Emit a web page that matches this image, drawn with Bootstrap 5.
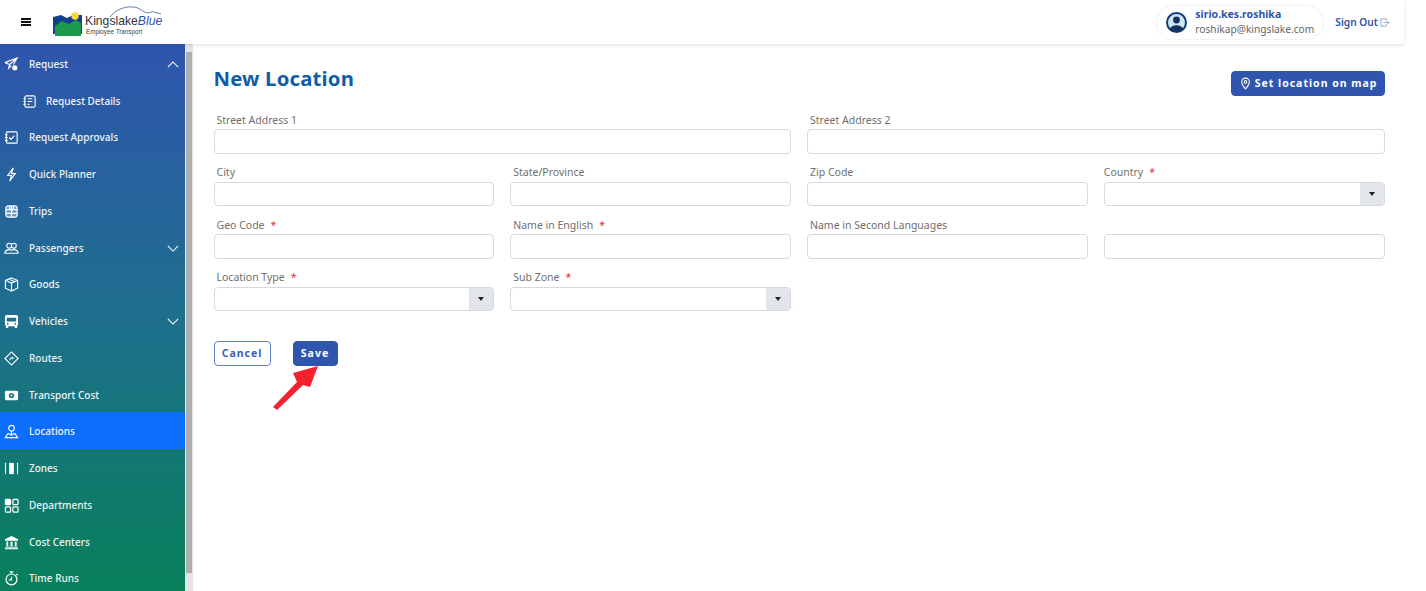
<!DOCTYPE html>
<html lang="en"><head><meta charset="utf-8"><title>New Location</title>
<link href="https://cdn.jsdelivr.net/npm/bootstrap@5.3.0/dist/css/bootstrap.min.css" rel="stylesheet">
<style>
html,body{height:591px;overflow:hidden;background:#fff}
body{font-family:"Noto Sans","Open Sans",sans-serif;position:relative}
.app-frame{width:1404px;height:591px}
.top-bar{height:44px;box-shadow:0 1px 4px rgba(0,0,0,.12);position:relative;z-index:2;background:#fff;flex:none}
.burger{width:10px;height:8px;margin-left:21px;border-top:2px solid #111;border-bottom:2px solid #111;position:relative}
.burger::after{content:"";position:absolute;left:0;right:0;top:1px;height:2px;background:#111}
.logo-box{margin-left:22px;width:110px;height:38px;position:relative;gap:3px;font-family:"Liberation Sans",sans-serif}
.logo-cloud{position:absolute;left:55px;top:2px;width:54px;height:14px}
.logo-text{padding-top:12px}
.logo-word{font-size:12.2px;color:#333;line-height:13px;white-space:nowrap}
.logo-blue{font-style:italic;color:#2f55a8}
.logo-sub{font-size:6.3px;color:#444;line-height:8px;padding-left:1px;white-space:nowrap}
.user-pill{width:168px;height:35px;border:1px solid #f3f3f3;border-radius:18px;padding-left:9px;margin-right:11px;box-shadow:0 0 3px rgba(0,0,0,.04)}
.user-name{font-size:10.5px;font-weight:700;color:#2f55a8;line-height:15px}
.user-mail{font-size:10.2px;color:#666;line-height:15px}
.sign-out{font-size:10.2px;font-weight:600;color:#2f55a8;margin-right:14px;gap:2px;padding-top:1px}
.side-nav{width:185px;height:547px;background:linear-gradient(180deg,#2f55ae 0%,#1e6f8d 50%,#08805a 100%);flex:none;padding-top:.5px;overflow:hidden}
.side-item{height:36.75px;color:#eef4f6;font-size:10px;font-weight:500;padding:3px 0 0 4px}
.side-item svg.ic{width:15px;height:15px;margin-right:10px;flex:none}
.side-item.sub-item{padding-left:22px}
.side-item.sub-item svg.ic{margin-right:9px}
.side-item.on{background:#0d6efd}
.chev{width:12px;height:7px;margin-left:auto;margin-right:6px}
.side-scroll{width:8px;height:547px;background:#e4e4e4;flex:none;padding:8px 1px 18px 1px}
.side-thumb{height:100%;background:#aeaeae}
.work-area{padding:0 19.5px 0 20.5px}
.page-title{font-size:20.3px;font-weight:700;color:#0f5ca8;margin:0;line-height:28px;letter-spacing:.2px}
.title-row{padding-top:20px;height:68px}
.map-btn,.save-btn{background:#2f55ae;border:1px solid #2f55ae;color:#fff;font-family:"Noto Sans",sans-serif;font-weight:700;font-size:10.5px;letter-spacing:1px;border-radius:4px}
.map-btn{height:25px;padding:0 6px 0 7px;margin-top:7px;gap:3px}
.form-cols{--bs-gutter-x:16px;--bs-gutter-y:0}
.field-label{font-size:10.5px;color:#6f6f6f;line-height:14px;height:17px;padding:.5px 0 0 3px;margin:0;display:block}
.field-label.flush{padding-left:0}
.req{color:#e0323c;margin-left:6px}
.field-box{height:24.5px;border:1px solid #d7d9e2;border-radius:4px;background:#fff;padding:0;margin-bottom:11px;box-shadow:none}
.drop-cap{width:24px;background:#e2e5e9;border-radius:0 3px 3px 0;height:100%;margin-left:auto}
.drop-cap::after{content:"";border-left:3.5px solid transparent;border-right:3.5px solid transparent;border-top:4px solid #222}
.act-row{margin-top:19px;gap:22px}
.cancel-btn{height:25px;width:57px;background:#fff;border:1px solid #5f7ec6;color:#3c60b3;font-weight:700;font-size:10.5px;letter-spacing:1px;border-radius:4px;padding:0}
.save-btn{height:25px;width:45px;padding:0}
.pointer-arrow{position:absolute;left:270px;top:362px;width:52px;height:50px;filter:blur(.5px)}
</style></head><body>
<div class="app-frame d-flex flex-column">
<header class="top-bar d-flex align-items-center">
 <div class="burger"></div>
 <div class="logo-box d-flex">
  <svg viewBox="0 0 29 38" width="29" height="38" class="flex-shrink-0">
   <path d="M0 14 L8 12 L14 15 L20 12 L29 12 V31 H0 Z" fill="#143f8f"/>
   <path d="M2 33 V23 L9 18 L16 21 L23 17 L28 20 V33 Z" fill="#1c9a4b"/>
   <circle cx="22" cy="13" r="3.7" fill="#f6d92a"/>
  </svg>
  <svg class="logo-cloud" viewBox="0 0 54 14"><path d="M2 12 C7 5 17 1 25 2 C31 2 35 7 39 8 C42 8 44 6 46 7 L53 9" fill="none" stroke="#3e5f9f" stroke-width=".8"/></svg>
  <div class="logo-text">
   <div class="logo-word">Kingslake<span class="logo-blue">Blue</span></div>
   <div class="logo-sub">Employee Transport</div>
  </div>
 </div>
 <div class="user-pill d-flex align-items-center gap-2 ms-auto">
  <svg width="21" height="21" viewBox="0 0 21 21"><circle cx="10.5" cy="10.5" r="9.5" fill="#cfe7f5" stroke="#123a78" stroke-width="2"/><circle cx="10.5" cy="8" r="3.4" fill="#15325e"/><path d="M4 17 C5 12 16 12 17 17 C14 20 7 20 4 17Z" fill="#15325e"/></svg>
  <div><div class="user-name">sirio.kes.roshika</div><div class="user-mail">roshikap@kingslake.com</div></div>
 </div>
 <div class="sign-out d-flex align-items-center">Sign Out
  <svg width="10" height="9" viewBox="0 0 11 10" fill="none" stroke="#8ea3cf" stroke-width="1"><path d="M7 3V1H1V9H7V7M4 5H10M8 3L10 5L8 7"/></svg>
 </div>
</header>
<div class="d-flex flex-grow-1">
 <nav class="side-nav">
  <div class="side-item d-flex align-items-center"><svg class="ic" viewBox="0 0 16 16" fill="none" stroke="#fff" stroke-width="1.2"><path d="M1 6L14 1L10 8M1 6L6 8L14 1M6 8L5 12L8 9"/><circle cx="11.5" cy="11.5" r="2.2" fill="#fff"/></svg>Request<svg class="chev" viewBox="0 0 14 8" fill="none" stroke="#fff" stroke-width="1.2"><path d="M1 7L7 1L13 7"/></svg></div>
  <div class="side-item sub-item d-flex align-items-center"><svg class="ic" viewBox="0 0 16 16" fill="none" stroke="#fff" stroke-width="1.2"><rect x="3" y="2" width="11" height="12" rx="1.5"/><path d="M6 5H11M6 8H11M6 11H8M1.5 5H4M1.5 8H4M1.5 11H4"/></svg>Request Details</div>
  <div class="side-item d-flex align-items-center"><svg class="ic" viewBox="0 0 16 16" fill="none" stroke="#fff" stroke-width="1.2"><rect x="2.5" y="2" width="11.5" height="12" rx="1"/><path d="M5.5 8L7.5 10L11 6M1 5H4M1 8H4M1 11H4"/></svg>Request Approvals</div>
  <div class="side-item d-flex align-items-center"><svg class="ic" viewBox="0 0 16 16" fill="none" stroke="#fff" stroke-width="1.2"><path d="M10 1L4 9H8L6 15L12 7H8Z"/></svg>Quick Planner</div>
  <div class="side-item d-flex align-items-center"><svg class="ic" viewBox="0 0 16 16" fill="none" stroke="#fff" stroke-width="1.3"><rect x="2" y="2" width="12" height="12" rx="2.5" fill="#ffffff55"/><path d="M2 6H14M2 10H14M8 2V14M6 2V6M10 2V6"/></svg>Trips</div>
  <div class="side-item d-flex align-items-center"><svg class="ic" viewBox="0 0 16 16" fill="none" stroke="#fff" stroke-width="1.2"><circle cx="5.5" cy="5" r="2.6"/><circle cx="10.5" cy="5" r="2.6"/><path d="M1 13C1 9 6 8.5 8 10C10 8.5 15 9 15 13Z"/></svg>Passengers<svg class="chev" viewBox="0 0 14 8" fill="none" stroke="#fff" stroke-width="1.2"><path d="M1 1L7 7L13 1"/></svg></div>
  <div class="side-item d-flex align-items-center"><svg class="ic" viewBox="0 0 16 16" fill="none" stroke="#fff" stroke-width="1.2"><path d="M8 1L14.5 3.5V12L8 15L1.5 12V3.5Z M1.5 3.5L8 6.5L14.5 3.5M8 6.5V15M5 2.2L11.5 5"/></svg>Goods</div>
  <div class="side-item d-flex align-items-center"><svg class="ic" viewBox="0 0 16 16"><path d="M3 1H13A2 2 0 0 1 15 3V12H14V15H11.5V13H4.5V15H2V12H1V3A2 2 0 0 1 3 1Z" fill="#fff"/><path d="M3 4H13V8H3Z" fill="#1e6f8d"/><circle cx="4" cy="10.5" r="1" fill="#1e6f8d"/><circle cx="12" cy="10.5" r="1" fill="#1e6f8d"/></svg>Vehicles<svg class="chev" viewBox="0 0 14 8" fill="none" stroke="#fff" stroke-width="1.2"><path d="M1 1L7 7L13 1"/></svg></div>
  <div class="side-item d-flex align-items-center"><svg class="ic" viewBox="0 0 16 16" fill="none" stroke="#fff" stroke-width="1.2"><path d="M8 1L15 8L8 15L1 8Z"/><path d="M6.5 10V7.5H10M8.7 6L10 7.5L8.7 9" stroke-width="1"/></svg>Routes</div>
  <div class="side-item d-flex align-items-center"><svg class="ic" viewBox="0 0 16 16"><rect x="1" y="3" width="14" height="10" rx="1.5" fill="#fff"/><circle cx="8" cy="8" r="2.8" fill="#1a7480"/><circle cx="8" cy="8" r="1" fill="#fff"/></svg>Transport Cost</div>
  <div class="side-item on d-flex align-items-center"><svg class="ic" viewBox="0 0 16 16" fill="none" stroke="#fff" stroke-width="1.2"><circle cx="8" cy="4.5" r="3"/><path d="M8 7.5V11M1.5 14.5L4 10.5H6C7 12.5 9 12.5 10 10.5H12L14.5 14.5Z"/></svg>Locations</div>
  <div class="side-item d-flex align-items-center"><svg class="ic" viewBox="0 0 16 16"><rect x="1" y="2" width="1.2" height="12" fill="#fff"/><rect x="5.5" y="2" width="5" height="12" fill="#fff"/><rect x="13.8" y="2" width="1.2" height="12" fill="#fff"/></svg>Zones</div>
  <div class="side-item d-flex align-items-center"><svg class="ic" viewBox="0 0 16 16" fill="none" stroke="#fff" stroke-width="1.3"><rect x="1.5" y="1.5" width="5.5" height="5.5" rx="1" fill="#fff"/><rect x="9.5" y="1.5" width="5.5" height="5.5" rx="1"/><rect x="1.5" y="9.5" width="5.5" height="5.5" rx="1"/><rect x="9.5" y="9.5" width="5.5" height="5.5" rx="1"/></svg>Departments</div>
  <div class="side-item d-flex align-items-center"><svg class="ic" viewBox="0 0 16 16" fill="#fff"><path d="M8 1L15 4.5V6H1V4.5Z"/><rect x="2.5" y="7" width="2" height="5"/><rect x="7" y="7" width="2" height="5"/><rect x="11.5" y="7" width="2" height="5"/><rect x="1.5" y="12.5" width="13" height="1"/><rect x="1" y="14" width="14" height="1.2"/></svg>Cost Centers</div>
  <div class="side-item d-flex align-items-center"><svg class="ic" viewBox="0 0 16 16" fill="none" stroke="#fff" stroke-width="1.3"><circle cx="8" cy="9" r="5.8"/><path d="M8 6V9.5H5M6 1H10M8 1V3M13 3L14.5 4.5"/></svg>Time Runs</div>
 </nav>
 <div class="side-scroll"><div class="side-thumb"></div></div>
 <main class="work-area flex-grow-1">
  <div class="title-row d-flex justify-content-between align-items-start">
   <h1 class="page-title">New Location</h1>
   <button class="map-btn d-flex align-items-center" type="button"><svg width="13" height="13" viewBox="0 0 12 12" fill="none" stroke="#fff" stroke-width="1"><path d="M6 11C3.5 8 2.5 6.5 2.5 4.5A3.5 3.5 0 0 1 9.5 4.5C9.5 6.5 8.5 8 6 11Z"/><circle cx="6" cy="4.5" r="1.2"/></svg>Set location on map</button>
  </div>
  <div class="row form-cols">
   <div class="col-6"><label class="field-label">Street Address 1</label><div class="field-box"></div></div>
   <div class="col-6"><label class="field-label">Street Address 2</label><div class="field-box"></div></div>
   <div class="col-3"><label class="field-label">City</label><div class="field-box"></div></div>
   <div class="col-3"><label class="field-label">State/Province</label><div class="field-box"></div></div>
   <div class="col-3"><label class="field-label">Zip Code</label><div class="field-box"></div></div>
   <div class="col-3"><label class="field-label flush">Country<span class="req">*</span></label><div class="field-box"><div class="drop-cap d-flex align-items-center justify-content-center"></div></div></div>
   <div class="col-3"><label class="field-label">Geo Code<span class="req">*</span></label><div class="field-box"></div></div>
   <div class="col-3"><label class="field-label">Name in English<span class="req">*</span></label><div class="field-box"></div></div>
   <div class="col-3"><label class="field-label">Name in Second Languages</label><div class="field-box"></div></div>
   <div class="col-3"><label class="field-label">&nbsp;</label><div class="field-box"></div></div>
   <div class="col-3"><label class="field-label">Location Type<span class="req">*</span></label><div class="field-box"><div class="drop-cap d-flex align-items-center justify-content-center"></div></div></div>
   <div class="col-3"><label class="field-label">Sub Zone<span class="req">*</span></label><div class="field-box"><div class="drop-cap d-flex align-items-center justify-content-center"></div></div></div>
  </div>
  <div class="act-row d-flex">
   <button class="cancel-btn" type="button">Cancel</button>
   <button class="save-btn" type="button">Save</button>
  </div>
 </main>
</div>
</div>
<svg class="pointer-arrow" viewBox="0 0 52 50"><path d="M3 45L27 20L23 11L48 4L40 25L33 23L7 48Z" fill="#f5222d"/></svg>
<script src="https://cdn.jsdelivr.net/npm/bootstrap@5.3.0/dist/js/bootstrap.bundle.min.js"></script>
</body></html>
